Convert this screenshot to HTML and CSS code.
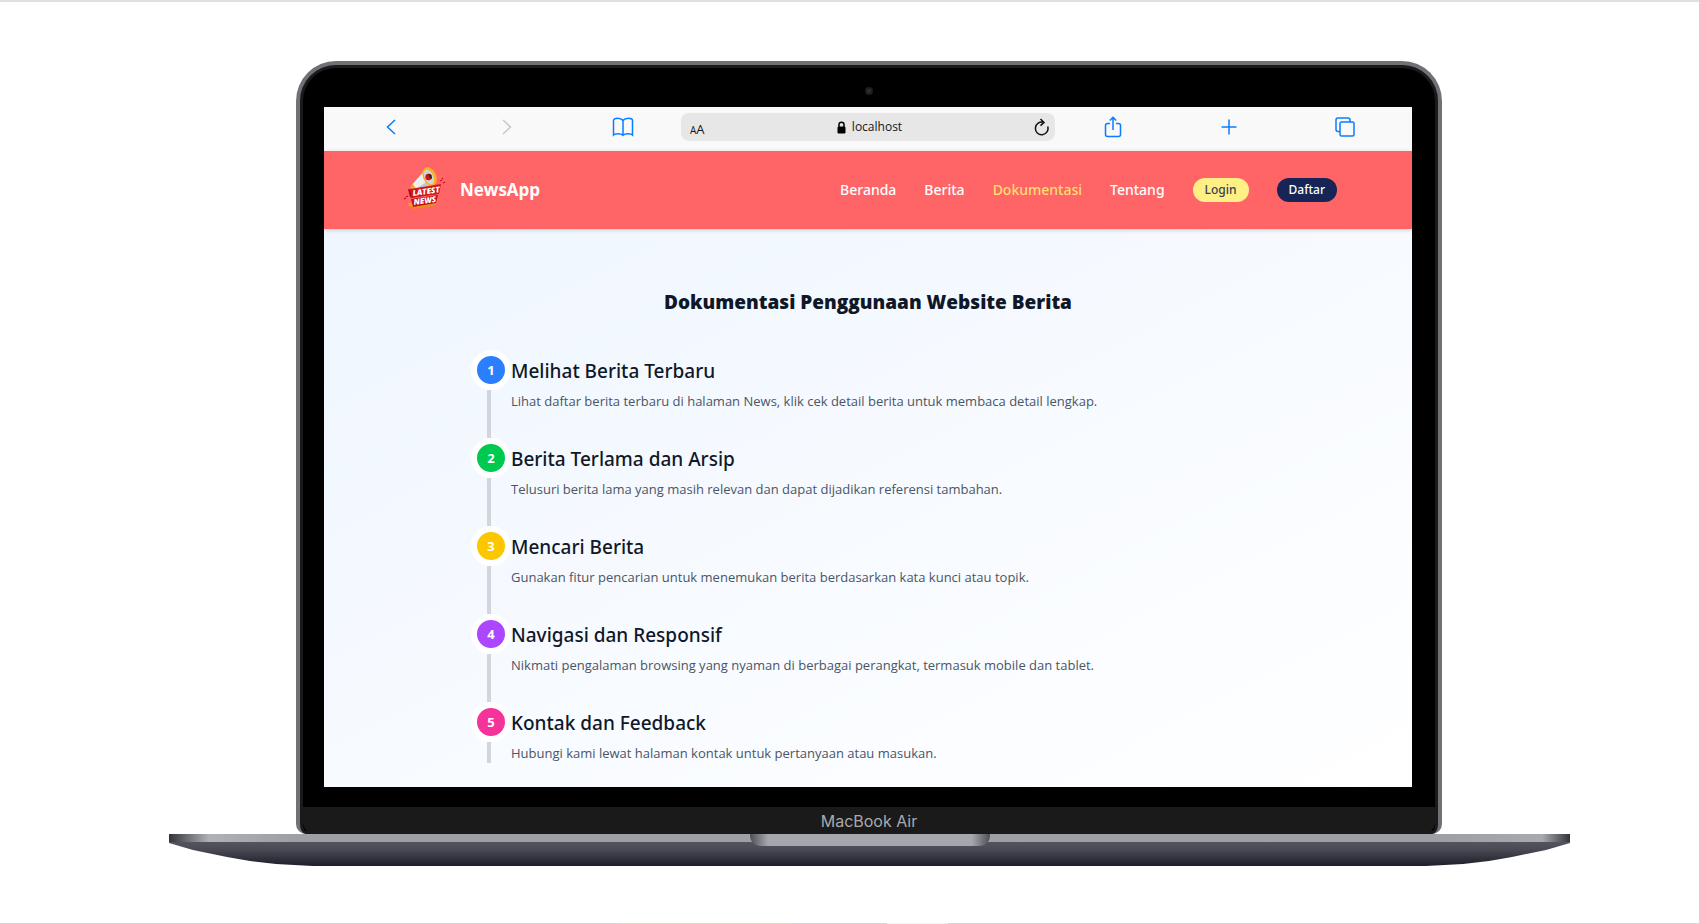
FILE: index.html
```html
<!DOCTYPE html>
<html lang="id">
<head>
<meta charset="utf-8">
<meta name="viewport" content="width=device-width, initial-scale=1">
<title>NewsApp - Dokumentasi</title>
<link rel="stylesheet" href="styles.css">
</head>
<body>
<div class="stage">
  <div class="laptop">
    <div class="lid">
      <div class="camera"></div>
      <div class="screen">
        <div class="toolbar">
          <button class="tool" type="button" aria-label="Kembali">
            <svg width="12" height="18" viewBox="0 0 12 18"><path d="M10 2 2.500 9 10 16"/></svg>
          </button>
          <button class="tool tool-off" type="button" aria-label="Maju">
            <svg width="12" height="18" viewBox="0 0 12 18"><path d="M2 2 9.500 9 2 16"/></svg>
          </button>
          <button class="tool" type="button" aria-label="Bookmark">
            <svg width="22" height="20" viewBox="0 0 22 20"><path d="M11 3.500C9.500 1.500 7.500 1.300 5.500 1.300c-2.300 0-4 .7-4 2.200V18c1-1 2.300-1.300 4.300-1.300S9.800 17 11 18.300c1.200-1.300 3.200-1.600 5.200-1.600s3.300.3 4.300 1.300V3.500c0-1.500-1.700-2.200-4-2.200-2 0-4 .2-5.500 2.200zM11 3.500v15"/></svg>
          </button>
          <div class="address">
            <span class="reader"><small>A</small>A</span>
            <span class="host">
              <svg width="9" height="13" viewBox="0 0 9 13"><rect x="0.500" y="5.500" width="8" height="7" rx="1.200"/><path d="M2 6V3.600C2 .6 7 .6 7 3.600V6"/></svg>
              localhost
            </span>
            <button class="reload" type="button" aria-label="Muat ulang">
              <svg width="15" height="18" viewBox="0 0 15 18"><path d="M13.700 8.500A6.300 6.300 0 1 1 9.500 4.400M6.500 1l3.500 3.400-3.500 3.200"/></svg>
            </button>
          </div>
          <button class="tool" type="button" aria-label="Bagikan">
            <svg width="18" height="22" viewBox="0 0 18 22"><path d="M6 7.500H3.500a2 2 0 0 0-2 2v9a2 2 0 0 0 2 2h11a2 2 0 0 0 2-2v-9a2 2 0 0 0-2-2H12M9 14V1.500M5.800 4.500 9 1.300l3.200 3.200"/></svg>
          </button>
          <button class="tool" type="button" aria-label="Tab baru">
            <svg width="16" height="16" viewBox="0 0 16 16"><path d="M8 .5v15M.5 8h15"/></svg>
          </button>
          <button class="tool" type="button" aria-label="Semua tab">
            <svg width="20" height="20" viewBox="0 0 20 20"><path d="M5 14.500H3a2 2 0 0 1-2-2V3a2 2 0 0 1 2-2h10a2 2 0 0 1 2 2v2"/><rect x="5" y="5" width="14" height="14" rx="1.500"/></svg>
          </button>
        </div>

        <header class="navbar">
          <a class="brand" href="#">
            <svg class="logo" width="42" height="44" viewBox="0 0 42 44">
              <path d="M8 19 20 5 30 20 11 24z" fill="#c3c8cd"/>
              <path d="M8 19 20 5l5 9-13 9z" fill="#eceef0"/>
              <path d="m8 17-1.500 4.500L9 25l4-1z" fill="#f7a81b"/>
              <ellipse cx="25.500" cy="10.500" rx="6.500" ry="10" transform="rotate(-24 25.500 10.500)" fill="#fbb01e"/>
              <ellipse cx="25" cy="11" rx="4.400" ry="7.800" transform="rotate(-24 25 11)" fill="#cfd4d9"/>
              <circle cx="24.500" cy="11" r="3.200" fill="#c9151b"/>
              <path d="m24 7.500 3.500 1.500.5 4-2-1z" fill="#2b2b2b"/>
              <path d="m8 36 25-4-1.500 7.500L9 43z" fill="#e6921a"/>
              <path d="m4 37 6-1-1 5-4-1z" fill="#f0a020"/>
              <path d="m4 23 4 1 1 8-3-1z" fill="#9d0b10"/>
              <path d="m6 23 31-5-2 10-28 4z" fill="#d3161b"/>
              <path d="m7 33 27-4-2 8-23 4z" fill="#c51016"/>
              <path d="m36 15 2-1M39 17l2-1M38 13l1-1M2 31l2-1M0 33l2-1" stroke="#c51016" stroke-width="1.300"/>
              <text x="9" y="30" transform="rotate(-8 9 30)" class="logo-text">LATEST</text>
              <text x="10" y="39" transform="rotate(-8 10 39)" class="logo-text">NEWS</text>
            </svg>
            <span>NewsApp</span>
          </a>
          <nav class="menu">
            <a href="#">Beranda</a>
            <a href="#">Berita</a>
            <a class="active" href="#">Dokumentasi</a>
            <a href="#">Tentang</a>
            <a class="pill pill-login" href="#">Login</a>
            <a class="pill pill-register" href="#">Daftar</a>
          </nav>
        </header>

        <main class="content">
          <h1>Dokumentasi Penggunaan Website Berita</h1>
          <ol class="steps">
            <li>
              <div class="marker"><span class="dot blue">1</span></div>
              <div class="step"><h2>Melihat Berita Terbaru</h2><p>Lihat daftar berita terbaru di halaman News, klik cek detail berita untuk membaca detail lengkap.</p></div>
            </li>
            <li>
              <div class="marker"><span class="dot green">2</span></div>
              <div class="step"><h2>Berita Terlama dan Arsip</h2><p>Telusuri berita lama yang masih relevan dan dapat dijadikan referensi tambahan.</p></div>
            </li>
            <li>
              <div class="marker"><span class="dot yellow">3</span></div>
              <div class="step"><h2>Mencari Berita</h2><p>Gunakan fitur pencarian untuk menemukan berita berdasarkan kata kunci atau topik.</p></div>
            </li>
            <li>
              <div class="marker"><span class="dot purple">4</span></div>
              <div class="step"><h2>Navigasi dan Responsif</h2><p>Nikmati pengalaman browsing yang nyaman di berbagai perangkat, termasuk mobile dan tablet.</p></div>
            </li>
            <li>
              <div class="marker"><span class="dot pink">5</span></div>
              <div class="step"><h2>Kontak dan Feedback</h2><p>Hubungi kami lewat halaman kontak untuk pertanyaan atau masukan.</p></div>
            </li>
          </ol>
        </main>
      </div>
      <div class="chin">MacBook Air</div>
    </div>
    <div class="base"><div class="notch"></div></div>
  </div>
</div>
</body>
</html>
```
FILE: styles.css
```css
* {
  box-sizing: border-box;
}

body {
  margin: 0;
  background: #fff;
  font-family: "Open Sans", "Noto Sans", sans-serif;
  color: #101828;
}

h1, h2, p, ol {
  margin: 0;
  padding: 0;
}

a {
  color: inherit;
  text-decoration: none;
}

button {
  padding: 0;
  border: 0;
  background: none;
}

svg {
  display: block;
  fill: none;
}

.stage {
  min-height: 100vh;
  padding: 59px 129px 40px 169px;
  border-top: 2px solid #e0e0e0;
  background: linear-gradient(90deg, #d6d6d6 621px, #dcdacb 621px 792px, #d6d6d6 792px 887px, #f2f2f2 887px 948px, #d6d6d6 948px) bottom / 100% 1px no-repeat;
}

/* Lid */
.lid {
  margin: 0 128px 0 127px;
  padding-top: 19px;
  border: 4px solid #6f7177;
  border-bottom: 0;
  border-radius: 40px 40px 10px 10px;
  background: #000;
  box-shadow: inset 0 0 0 3px #191a1a;
}

.camera {
  width: 8px;
  height: 8px;
  margin: 3px auto 12px;
  border: 2px solid #1d1d1d;
  border-radius: 50%;
  background: #303030;
}

.screen {
  margin: 0 26px 20px 24px;
  background: #f9f9f9;
}

.chin {
  margin: 0 3px;
  padding-top: 2px;
  border-radius: 0 0 12px 12px;
  background: #1a1a1a;
  color: #a9a9ad;
  font: 16px/25px Inter, sans-serif;
  text-align: center;
}

/* Base */
.base {
  height: 32px;
  background:
    linear-gradient(90deg, #33343a, #b0b1b6 40px, #9fa0a5 120px, #9fa0a5 calc(100% - 120px), #a9aaae calc(100% - 28px), #33343a) top / 100% 8px no-repeat,
    linear-gradient(#5f6068, #484953 50%, #1e1d29);
  clip-path: polygon(0 0, 100% 0, 100% 9px, calc(100% - 24px) 16px, calc(100% - 58px) 23px, calc(100% - 81px) 27px, calc(100% - 107px) 30px, calc(100% - 144px) 32px, 144px 32px, 107px 30px, 81px 27px, 58px 23px, 24px 16px, 0 9px);
}

.notch {
  width: 240px;
  height: 12px;
  margin: 0 auto;
  border-radius: 0 0 10px 10px;
  background: linear-gradient(90deg, #4e4f55, #a6a7ac 18px, #a6a7ac calc(100% - 18px), #4e4f55);
}

/* Browser toolbar */
.toolbar {
  display: grid;
  grid-template-columns: repeat(3, 1fr) 374px repeat(3, 1fr);
  align-items: center;
  padding: 6px 9px 10px;
}

.tool {
  display: grid;
  place-items: center;
  stroke: #0a7cff;
  stroke-width: 1.5;
}

.tool-off {
  stroke: #c8c8c8;
}

.address {
  display: grid;
  grid-template-columns: 1fr auto 1fr;
  align-items: center;
  height: 28px;
  padding: 0 6px 0 9px;
  border-radius: 8px;
  background: #e7e7e7;
  font-size: 13px;
  line-height: 18px;
}

.reader {
  padding-top: 5px;
}

.reader small {
  font-size: 10px;
}

.host {
  display: flex;
  align-items: center;
  gap: 6px;
  font-size: 12px;
}

.host rect {
  fill: #000;
}

.host path {
  stroke: #000;
  stroke-width: 1.5;
}

.reload {
  justify-self: end;
  stroke: #111;
  stroke-width: 1.5;
}

/* Site header */
.navbar {
  position: relative;
  display: flex;
  align-items: center;
  justify-content: space-between;
  padding: 15px 75px 19px 80px;
  background: #ff6467;
  box-shadow: 0 1px 4px #00000033;
  color: #fff;
}

.brand {
  display: flex;
  align-items: center;
  gap: 14px;
  font-size: 17px;
  font-weight: 700;
}

.brand span,
.menu {
  padding-top: 3px;
}

.logo-text {
  fill: #fff;
  font: italic 900 8px "Open Sans", sans-serif;
}

.menu {
  display: flex;
  align-items: center;
  gap: 28px;
  font-family: "Noto Sans", sans-serif;
  font-size: 14px;
  font-weight: 500;
}

.active {
  color: #ffdf6f;
}

.pill {
  padding: 0 12px;
  border-radius: 12px;
  font-size: 12px;
  line-height: 24px;
}

.pill-login {
  background: #fff085;
  color: #364153;
}

.pill-register {
  background: #162456;
}

/* Documentation */
.content {
  padding: 59px 146px 24px;
  background: linear-gradient(to bottom right, #eff6ff, #fff);
}

h1 {
  margin-bottom: 34px;
  font-size: 19px;
  font-weight: 800;
  line-height: 28px;
  text-align: center;
}

.steps {
  list-style: none;
}

.steps li {
  display: flex;
}

.marker {
  display: flex;
  flex-direction: column;
  width: 41px;
  padding-left: 1px;
}

.marker::after {
  content: "";
  flex: 1;
  width: 4px;
  margin-left: 16px;
  background: #d1d5dc;
}

.dot {
  width: 40px;
  height: 40px;
  border: 6px solid #fff;
  border-radius: 50%;
  color: #fff;
  font-size: 13px;
  font-weight: 700;
  line-height: 28px;
  text-align: center;
}

.blue { background: #2b7fff; }
.green { background: #00c950; }
.yellow { background: #fdc700; }
.purple { background: #ad46ff; }
.pink { background: #f6339a; }

.step {
  padding: 7px 0 27px;
}

.steps li:last-child .step {
  padding-bottom: 0;
}

h2 {
  margin-bottom: 6px;
  font-family: "Noto Sans", sans-serif;
  font-size: 19px;
  font-weight: 500;
  line-height: 28px;
}

.step p {
  color: #4a5565;
  font-size: 13px;
  line-height: 20px;
}
```
